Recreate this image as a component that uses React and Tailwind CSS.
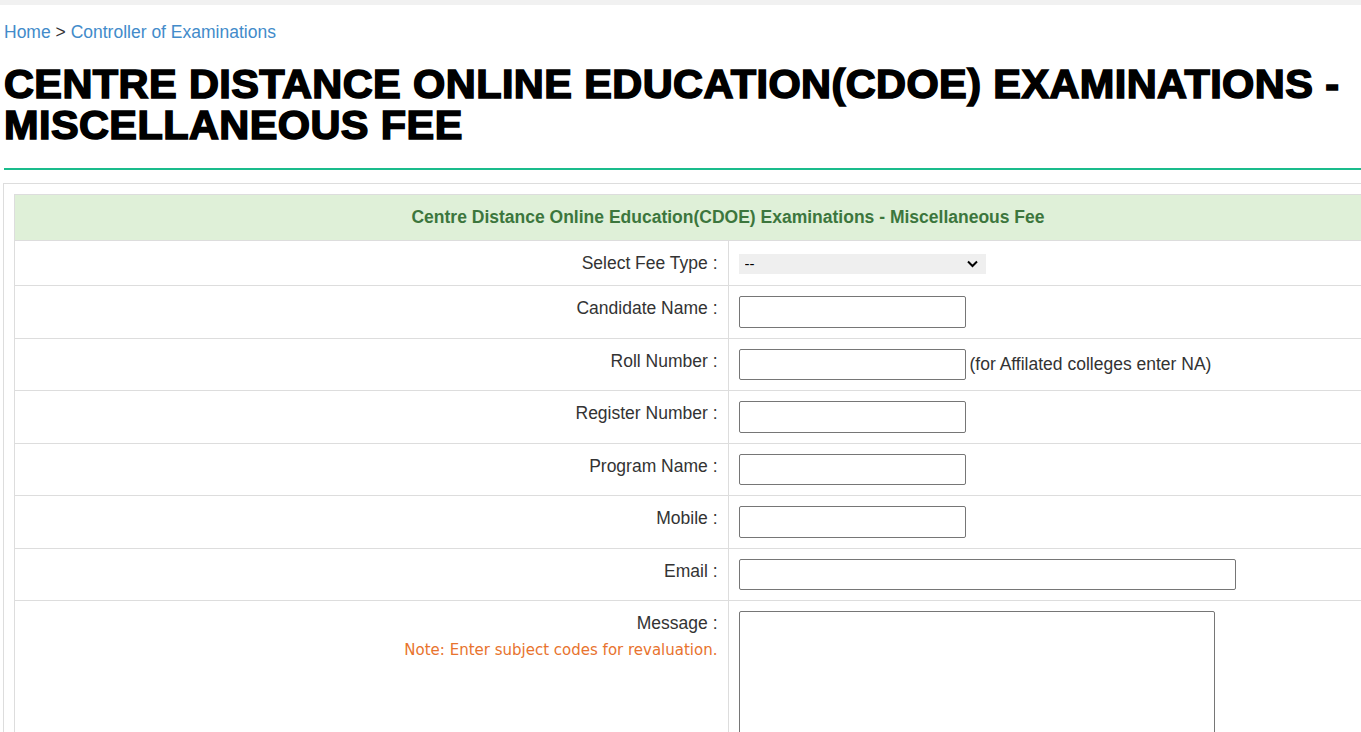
import React from 'react';

const fields = [
  { label: 'Candidate Name :', id: 'cname' },
  { label: 'Roll Number :', id: 'roll', hint: '(for Affilated colleges enter NA)' },
  { label: 'Register Number :', id: 'regno' },
  { label: 'Program Name :', id: 'program' },
  { label: 'Mobile :', id: 'mobile' },
];

function LabelCell({ children }) {
  return (
    <td className="w-1/2 border border-[#dddddd] p-[10px] text-right align-top leading-[24px] text-[#333333]">
      {children}
    </td>
  );
}

function FieldCell({ children }) {
  return (
    <td className="w-1/2 border border-[#dddddd] p-[10px] align-top leading-[24px] text-[#333333]">
      {children}
    </td>
  );
}

function TextBox({ id, wide }) {
  return (
    <input
      id={id}
      type="text"
      className={`h-[31.5px] rounded-[2px] border border-[#767676] bg-white px-2 align-middle ${wide ? 'w-[497px]' : 'w-[227px]'}`}
    />
  );
}

export default function App() {
  return (
    <div className="w-[1361px] h-[732px] overflow-hidden bg-white font-['Liberation_Sans',Arial,sans-serif] text-[17.5px]">
      <div className="h-[5px] bg-[#f1f1f1]" />
      <div className="pl-[4px]">
        <div className="mt-[16px] text-[17.5px] leading-[22px] text-[#333333]">
          <a href="#" className="text-[#428bca]">Home</a> &gt;{' '}
          <a href="#" className="text-[#428bca]">Controller of Examinations</a>
        </div>
        <h1 className="mt-[20px] text-[41.5px] font-black leading-[41px] tracking-[0.4px] text-black [-webkit-text-stroke:1.6px_black]">
          CENTRE DISTANCE ONLINE EDUCATION(CDOE) EXAMINATIONS - MISCELLANEOUS FEE
        </h1>
        <div className="mt-[23px] h-[2px] bg-[#1abc8c]" />
      </div>

      <div className="ml-[3px] mt-[13px] w-[1450px] border border-[#dddddd] p-[10px]">
        <table className="w-[1428px] border-collapse">
          <thead>
            <tr>
              <th
                colSpan={2}
                className="h-[46px] border border-[#dddddd] bg-[#dff0d8] text-center font-bold text-[#3c763d]"
              >
                Centre Distance Online Education(CDOE) Examinations - Miscellaneous Fee
              </th>
            </tr>
          </thead>
          <tbody>
            <tr>
              <LabelCell>Select Fee Type :</LabelCell>
              <FieldCell>
                <div className="relative mt-[3px] inline-block align-top">
                  <select className="block h-[20px] w-[247px] appearance-none bg-[#efefef] pl-[6px] text-[15px] leading-[20px] text-black">
                    <option>--</option>
                  </select>
                  <svg
                    className="pointer-events-none absolute right-[8px] top-[6px]"
                    width="11"
                    height="8"
                    viewBox="0 0 11 8"
                    fill="none"
                  >
                    <path d="M1 1.5 L5.5 6 L10 1.5" stroke="black" strokeWidth="2" />
                  </svg>
                </div>
              </FieldCell>
            </tr>
            {fields.map((f) => (
              <tr key={f.id}>
                <LabelCell>{f.label}</LabelCell>
                <FieldCell>
                  <TextBox id={f.id} />
                  {f.hint && <span className="ml-[4px] align-middle">{f.hint}</span>}
                </FieldCell>
              </tr>
            ))}
            <tr>
              <LabelCell>Email :</LabelCell>
              <FieldCell>
                <TextBox id="email" wide />
              </FieldCell>
            </tr>
            <tr>
              <LabelCell>
                <div>Message :</div>
                <div className="mt-[4px] font-['DejaVu_Sans',Verdana,sans-serif] text-[15px] leading-[22px] text-[#e8732e]">
                  Note: Enter subject codes for revaluation.
                </div>
              </LabelCell>
              <FieldCell>
                <textarea className="block h-[150px] w-[476px] rounded-[2px] border border-[#767676] bg-white" />
              </FieldCell>
            </tr>
          </tbody>
        </table>
      </div>
    </div>
  );
}
